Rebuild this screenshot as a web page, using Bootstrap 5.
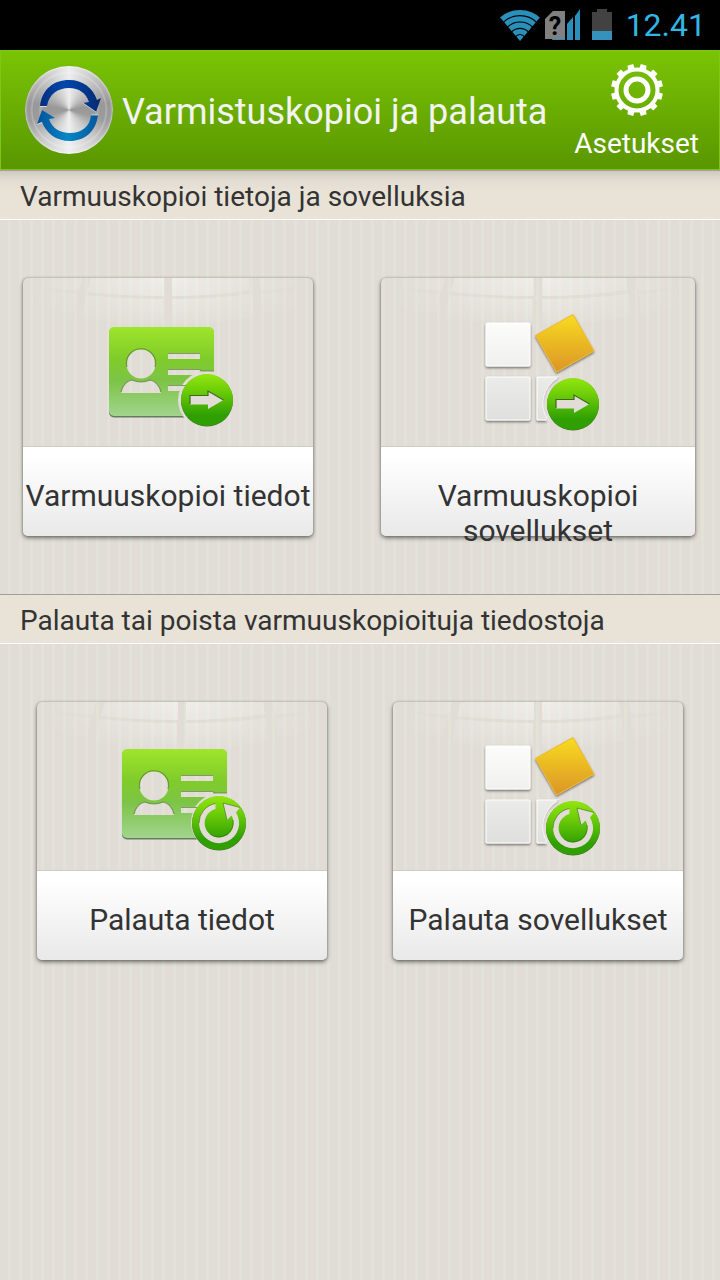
<!DOCTYPE html>
<html lang="fi">
<head>
<meta charset="utf-8">
<meta name="viewport" content="width=device-width, initial-scale=1">
<title>Varmistuskopioi ja palauta</title>
<link rel="stylesheet" href="https://cdn.jsdelivr.net/npm/bootstrap@5.3.0/dist/css/bootstrap.min.css">
<style>
  body {
    font-family: Roboto, sans-serif;
    color: #333;
    background: #e1dcd6 repeating-linear-gradient(90deg, #e1dcd6 0 8px, #e2e2d9 8px 11px);
  }
  .status-bar { height: 50px; background: #000; color: #33b5e5; padding-right: 14px; }
  .clock { font-size: 32px; line-height: 52px; margin-left: 14px; }
  .app-header {
    height: 120px;
    background: linear-gradient(#7ac405, #5a9600);
    border: 1px solid #7cc814;
    color: #f3f3f3;
    padding: 0 20px 0 23px;
  }
  .logo-disc {
    width: 88px; height: 88px; border-radius: 50%; margin: 0 1px;
    background:
      radial-gradient(circle, transparent 0 26px, rgba(185,185,185,.5) 27px 29px, transparent 31px 36px, rgba(255,255,255,.25) 37px, transparent 39px),
      conic-gradient(#eee, #c4c4c4 40deg, #989898 80deg, #9c9c9c 105deg, #ccc 140deg, #f0f0f0 180deg, #ccc 220deg, #9c9c9c 255deg, #989898 280deg, #c4c4c4 320deg, #eee);
    box-shadow: inset 0 0 2px 1px rgba(255,255,255,.5);
  }
  .app-title { font-size: 36px; line-height: 44px; margin-left: 8px; padding-top: 4px; }
  .settings-btn { font-size: 28px; line-height: 32px; color: #fff; gap: 11px; padding-top: 3px; }
  .section-title {
    height: 50px; font-size: 28px; line-height: 51px; padding-left: 20px;
    background: #e9e2d7; border-top: 1px solid #a09f9b; border-bottom: 1px solid #fff;
  }
  .section-first { background: linear-gradient(#cfc9bf, #e3dcd2 9px, #e9e2d7 20px); }
  .tile-row { padding: 58px 25px 58px 23px; }
  .tile-row-even { padding: 58px 37px; }
  .tile {
    width: 290px; height: 258px; border-radius: 5px; color: #333;
    box-shadow: 0 2px 4px rgba(0,0,0,.5), 0 0 2px rgba(0,0,0,.25);
  }
  .tile-wide { width: 314px; }
  .tile-art { height: 169px; border-bottom: 1px solid #cfcbc5; }
  .tile-label {
    height: 89px; font-size: 30px; line-height: 35px; padding-top: 31px;
    background: linear-gradient(#fff 10%, #e9e9e9); border-radius: 0 0 5px 5px;
  }
</style>
</head>
<body>
<svg width="0" height="0" class="position-absolute" aria-hidden="true">
  <defs>
    <linearGradient id="gCard" x1="0" y1="0" x2="0" y2="1"><stop offset="0" stop-color="#9fe52c"/><stop offset=".35" stop-color="#80cc2a"/><stop offset=".6" stop-color="#7cc446"/><stop offset="1" stop-color="#a2d48e"/></linearGradient>
    <linearGradient id="gBall" x1="0" y1="0" x2="0" y2="1"><stop offset="0" stop-color="#93e60f"/><stop offset=".3" stop-color="#70cf08"/><stop offset=".8" stop-color="#2f9f02"/><stop offset="1" stop-color="#2f9f02"/></linearGradient>
    <linearGradient id="gGold" x1="0" y1="0" x2="0" y2="1"><stop offset="0" stop-color="#f8dc22"/><stop offset="1" stop-color="#dc9426"/></linearGradient>
    <linearGradient id="gWhite" x1="0" y1="0" x2="0" y2="1"><stop offset="0" stop-color="#fcfcfb"/><stop offset="1" stop-color="#f0f0ef"/></linearGradient>
    <linearGradient id="gGrey" x1="0" y1="0" x2="0" y2="1"><stop offset="0" stop-color="#ebebea"/><stop offset="1" stop-color="#dfdfde"/></linearGradient>
    <linearGradient id="gGlare" gradientUnits="userSpaceOnUse" x1="0" y1="0" x2="0" y2="52"><stop offset="0" stop-color="#fff" stop-opacity=".5"/><stop offset=".55" stop-color="#fff" stop-opacity=".26"/><stop offset="1" stop-color="#fff" stop-opacity="0"/></linearGradient>
    <linearGradient id="gSide" x1="0" y1="0" x2="1" y2="0"><stop offset="0" stop-color="#fff" stop-opacity="0"/><stop offset=".2" stop-color="#fff" stop-opacity=".35"/><stop offset=".5" stop-color="#fff"/><stop offset=".8" stop-color="#fff" stop-opacity=".35"/><stop offset="1" stop-color="#fff" stop-opacity="0"/></linearGradient>
    <mask id="mGlare" maskUnits="userSpaceOnUse" x="0" y="0" width="290" height="70"><rect width="290" height="70" fill="url(#gSide)"/></mask>
    <filter id="drop" x="-20%" y="-20%" width="140%" height="150%"><feDropShadow dx="0" dy="1.5" stdDeviation="1" flood-opacity=".5"/></filter>
    <mask id="mCut" maskUnits="userSpaceOnUse" x="-5" y="-5" width="140" height="130">
      <rect x="-5" y="-5" width="140" height="130" fill="#fff"/>
      <circle cx="98" cy="73" r="29"/>
      <circle cx="32" cy="37" r="14.500"/>
      <path d="M12 66C13 59 17 54 23 53Q32 57 41 53C47 54 51 59 52 66Z"/>
      <path d="M59 26h32v6H59zM59 42h32l1 2h14v4H59zM59 58h19l-6 6H59z"/>
    </mask>
    <mask id="mBlock" maskUnits="userSpaceOnUse" x="50" y="60" width="60" height="60"><rect x="50" y="60" width="60" height="60" fill="#fff"/><circle cx="88" cy="90" r="31"/></mask>

    <symbol id="glare" viewBox="0 0 290 70" preserveAspectRatio="none">
      <g mask="url(#mGlare)" fill="url(#gGlare)">
        <path d="M68 0H141V18Q100 18 64 14ZM149 0H226L228 12Q190 18 149 18ZM63 17Q100 21 140 21V48Q95 46 59 40ZM149 21Q190 21 229 16L231 39Q190 47 149 47Z"/>
        <path d="M20 0H59L56 13Q35 12 18 8ZM18 11Q35 15 54 16L50 37Q30 34 14 26ZM236 0H270L272 8Q255 12 238 13ZM238 16Q258 15 273 11L276 27Q258 34 240 37Z"/>
      </g>
    </symbol>
    <symbol id="contact" viewBox="0 0 130 110" overflow="visible">
      <g mask="url(#mCut)"><rect y="1" width="105" height="89.500" rx="5" fill="#687a5e"/><rect width="105" height="89" rx="5" fill="url(#gCard)"/></g>
      <path d="M18 40A14.500 14.500 0 1 1 46 40M12 65C14 57 18 54 23 53Q32 57 41 53C46 54 50 57 52 65M59 26.500H91M59 42.500H91L92 44H105M59 58.500H77" fill="none" stroke="#52752b" stroke-opacity=".65" stroke-width="1.200"/>
    </symbol>
    <symbol id="blocks" viewBox="0 0 130 120" overflow="visible">
      <g filter="url(#drop)"><rect x="1" y="9" width="44" height="43" rx="1" fill="url(#gWhite)" stroke="#fff"/></g>
      <g filter="url(#drop)"><rect x="1" y="63" width="44" height="43" rx="1" fill="url(#gGrey)" stroke="#fff"/></g>
      <g filter="url(#drop)"><path mask="url(#mBlock)" d="M52 63H96V106H52Z" fill="url(#gGrey)" stroke="#fff"/></g>
      <path d="M72 64A30 30 0 0 0 62 105" fill="none" stroke="#f3f1ee" stroke-width="1.500"/>
      <g filter="url(#drop)"><path d="M50.500 21.500L88 0.500L109 37L71.500 58Z" fill="url(#gGold)" stroke="#efb928"/></g>
    </symbol>
    <symbol id="arrowBall" viewBox="0 0 54 54" overflow="visible">
      <circle cx="27" cy="27.500" r="26" fill="#486b34"/><circle cx="27" cy="27" r="26" fill="url(#gBall)"/>
      <path d="M10 22.500H28V17.500L43.500 27L28 36V31.500H10Z" fill="#e1dcd6"/>
      <path d="M10 31V22.500H28V18L43.500 27" fill="none" stroke="#3d6c18" stroke-width="1.200"/>
    </symbol>
    <symbol id="restoreBall" viewBox="0 0 54 54" overflow="visible">
      <circle cx="27" cy="27.500" r="27" fill="#486b34"/><circle cx="27" cy="27" r="27" fill="url(#gBall)"/>
      <path d="M23.500 7.500A20 20 0 1 0 44 16.500L48 11.500L31 7L35 24L39.500 19.500A14.500 14.500 0 1 1 23.500 13Z" fill="#e1dcd6"/>
      <path d="M23.500 7.500A20 20 0 0 0 7 27M48 11.500L31 7L35 24M41 24A14.500 14.500 0 0 1 18 38" fill="none" stroke="#3d6c18" stroke-opacity=".6"/>
    </symbol>
  </defs>
</svg>

<div class="status-bar d-flex justify-content-end align-items-center">
  <svg width="112" height="50" viewBox="0 0 112 50" aria-hidden="true">
    <clipPath id="fan"><path d="M20 41L-2 15Q20-1 42 15Z"/></clipPath>
    <g clip-path="url(#fan)" fill="none" stroke="#2a8fba">
      <circle cx="20" cy="39.500" r="4" fill="#2a8fba"/>
      <g stroke-width="5.200"><circle cx="20" cy="40" r="8.500"/><circle cx="20" cy="40" r="14.800"/><circle cx="20" cy="40" r="21.200"/><circle cx="20" cy="40" r="27.500"/></g>
    </g>
    <path d="M52 40H65V27L54 35ZM67 24L73 17V40H67ZM75 16L80 9V40H75Z" fill="#2a8fba"/>
    <path d="M45 19L53 11H65V39H45Z" fill="#808080"/>
    <text x="55" y="35" text-anchor="middle" font-family="Roboto, sans-serif" font-size="25" font-weight="700" fill="#000">?</text>
    <path d="M92 12H97V9H107V12H112V31H92Z" fill="#424242"/><path d="M92 31H112V40H92Z" fill="#3692bd"/>
  </svg>
  <span class="clock">12.41</span>
</div>

<header class="app-header d-flex align-items-center">
  <div class="logo-disc flex-shrink-0">
    <svg width="88" height="88" viewBox="1 1 88 88" class="d-block" aria-hidden="true">
      <defs>
        <linearGradient id="gTop" x1="0" x2="1"><stop offset="0" stop-color="#04307f"/><stop offset=".4" stop-color="#0347ad"/><stop offset="1" stop-color="#042a72"/></linearGradient>
        <linearGradient id="gLow" x1="0" x2="1"><stop offset="0" stop-color="#03539a"/><stop offset=".5" stop-color="#0787c5"/><stop offset="1" stop-color="#04589b"/></linearGradient>
      </defs>
      <path d="M16 41C18 24 30 15 45 15C59 15 69 23 73 35L77 33L72 47L59 38L65 37C62 28 55 23 45 23C34 23 25 29 23 41Z" fill="url(#gTop)"/>
      <path d="M74 50C72 67 60 76 46 76C32 76 22 68 18 57L13 59L18 45L31 53L25 54C28 63 36 68 46 68C57 68 66 62 67 50Z" fill="url(#gLow)"/>
      <path d="M16 41.500H23M18 57.500L13 59.500M67 50H74M72 47L59 38" fill="none" stroke="#fff" stroke-opacity=".6"/>
    </svg>
  </div>
  <h1 class="app-title fw-normal mb-0 text-nowrap">Varmistuskopioi ja palauta</h1>
  <button type="button" class="settings-btn btn px-0 pb-0 border-0 ms-auto d-flex flex-column align-items-center">
    <svg width="54" height="54" viewBox="-27 -27 54 54" aria-hidden="true">
      <g fill="#fff">
        <g id="teeth"><path id="tooth" d="M-3.500-19L-3-26H3L3.500-19Z" transform="rotate(15)"/><use href="#tooth" transform="rotate(30)"/><use href="#tooth" transform="rotate(60)"/></g>
        <use href="#teeth" transform="rotate(90)"/><use href="#teeth" transform="rotate(180)"/><use href="#teeth" transform="rotate(270)"/>
      </g>
      <circle r="20.500" fill="none" stroke="#fff" stroke-width="4"/>
      <circle r="11" fill="none" stroke="#fff" stroke-width="5"/>
    </svg>
    Asetukset
  </button>
</header>

<main>
  <section>
    <h2 class="section-title section-first fw-normal mb-0">Varmuuskopioi tietoja ja sovelluksia</h2>
    <div class="tile-row d-flex justify-content-between">
      <button type="button" class="tile btn p-0 border-0 d-flex flex-column align-items-stretch">
        <svg class="tile-art w-100 d-block" viewBox="0 0 290 168" aria-hidden="true"><use href="#glare" width="290" height="70"/><use href="#contact" x="86" y="49" width="130" height="110"/><use href="#arrowBall" x="157" y="95" width="54" height="54"/></svg>
        <span class="tile-label text-nowrap">Varmuuskopioi tiedot</span>
      </button>
      <button type="button" class="tile tile-wide btn p-0 border-0 d-flex flex-column align-items-stretch">
        <svg class="tile-art w-100 d-block" viewBox="0 0 314 168" aria-hidden="true"><use href="#glare" width="314" height="70"/><use href="#blocks" x="104" y="36" width="130" height="120"/><use href="#arrowBall" x="165" y="99" width="54" height="54"/></svg>
        <span class="tile-label">Varmuuskopioi<br>sovellukset</span>
      </button>
    </div>
  </section>
  <section>
    <h2 class="section-title fw-normal mb-0">Palauta tai poista varmuuskopioituja tiedostoja</h2>
    <div class="tile-row tile-row-even d-flex justify-content-between">
      <button type="button" class="tile btn p-0 border-0 d-flex flex-column align-items-stretch">
        <svg class="tile-art w-100 d-block" viewBox="0 0 290 168" aria-hidden="true"><use href="#glare" width="290" height="70"/><use href="#contact" x="85" y="47" width="130" height="110"/><use href="#restoreBall" x="155" y="94" width="54" height="54"/></svg>
        <span class="tile-label text-nowrap">Palauta tiedot</span>
      </button>
      <button type="button" class="tile btn p-0 border-0 d-flex flex-column align-items-stretch">
        <svg class="tile-art w-100 d-block" viewBox="0 0 290 168" aria-hidden="true"><use href="#glare" width="290" height="70"/><use href="#blocks" x="92" y="35" width="130" height="120"/><use href="#restoreBall" x="153" y="99" width="54" height="54"/></svg>
        <span class="tile-label text-nowrap">Palauta sovellukset</span>
      </button>
    </div>
  </section>
</main>
<script src="https://cdn.jsdelivr.net/npm/bootstrap@5.3.0/dist/js/bootstrap.bundle.min.js"></script>
</body>
</html>
